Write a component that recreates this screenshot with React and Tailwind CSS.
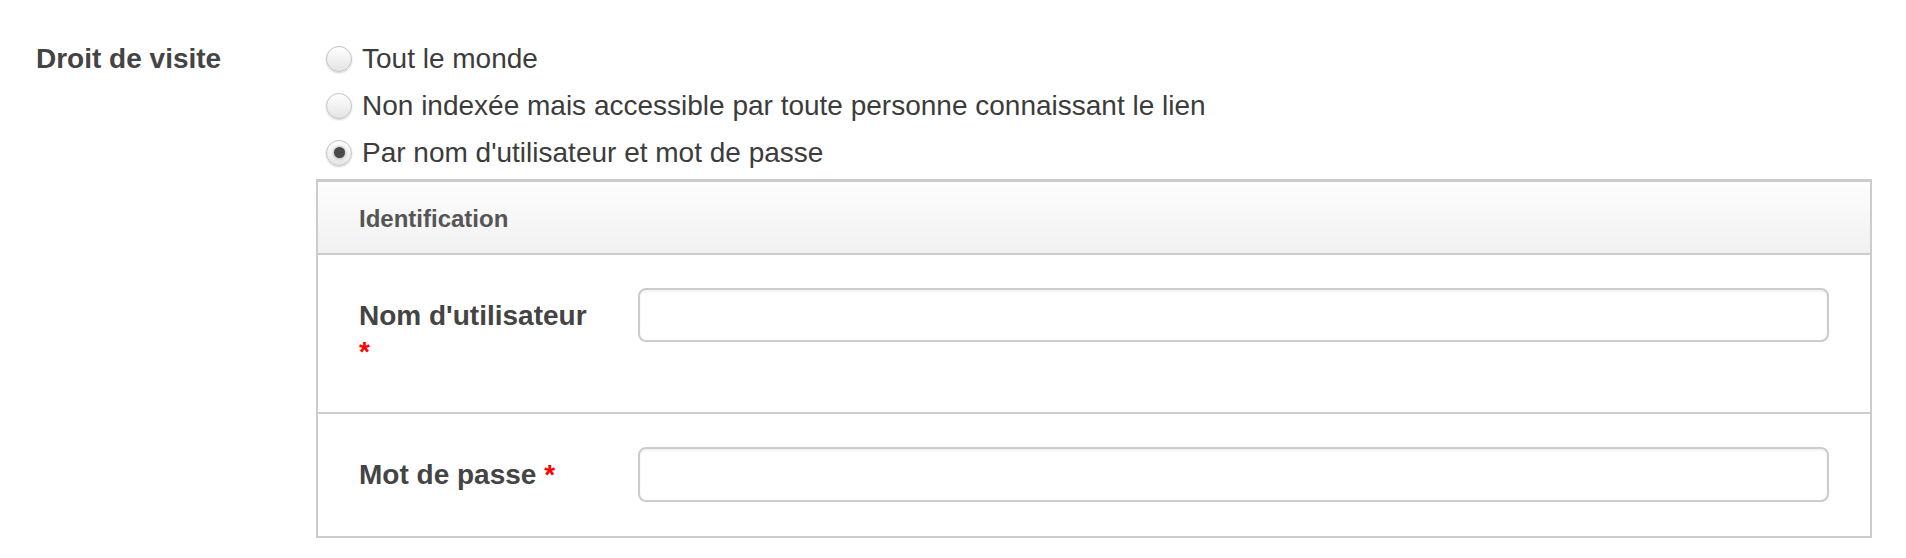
import React from "react";

function Radio({ checked, label }) {
  return (
    <label className="flex h-[47px] items-center gap-[10px]">
      <span className="flex h-[26px] w-[26px] items-center justify-center rounded-full border border-[#c4c4c4] bg-gradient-to-b from-[#ffffff] to-[#e4e4e4] shadow-[0_1px_2px_rgba(0,0,0,0.18)]">
        {checked && <span className="h-[11px] w-[11px] rounded-full bg-[#4a4a4a] shadow-[0_0_3px_rgba(0,0,0,0.45)]" />}
      </span>
      <span className="text-[28px] text-[#3c3c3c]">{label}</span>
    </label>
  );
}

function Req() {
  return <span className="text-[#ff0000]">*</span>;
}

export default function App() {
  return (
    <div className="h-[558px] w-[1906px] bg-white font-['Liberation_Sans',Arial,sans-serif] text-[#444444]">
      <div className="flex pl-[36px] pt-[35px]">
        <div className="w-[280px] text-[28px] font-bold leading-[47px] text-[#444444]">Droit de visite</div>

        <div className="w-[1556px]">
          <div className="pl-[10px]">
            <Radio label="Tout le monde" />
            <Radio label="Non indexée mais accessible par toute personne connaissant le lien" />
            <Radio checked label="Par nom d'utilisateur et mot de passe" />
          </div>

          {/* Identification panel */}
          <div className="mt-[3px] border-2 border-t-[3px] border-[#cccccc]">
            <div className="flex h-[73px] items-center border-b-2 border-[#cccccc] bg-gradient-to-b from-[#fdfdfd] to-[#f1f1f1] px-[41px] pt-[2px] text-[24px] font-bold text-[#555555]">
              Identification
            </div>

            <div className="flex items-start border-b-2 border-[#cccccc] px-[41px] py-[33px]">
              <div className="w-[279px] shrink-0">
                <div className="w-[240px] pb-[9px] pt-[10px] text-[28px] font-bold leading-[36px] text-[#444444]">
                  Nom d'utilisateur <Req />
                </div>
              </div>
              <input type="text" className="h-[54px] flex-1 rounded-[8px] border-2 border-[#cccccc] bg-white shadow-[inset_0_2px_2px_rgba(0,0,0,0.05)] outline-none" />
            </div>

            <div className="flex items-center px-[41px] pb-[34px] pt-[33px]">
              <div className="w-[279px] shrink-0 text-[28px] font-bold leading-[34px] text-[#444444]">
                Mot de passe <Req />
              </div>
              <input type="password" className="h-[55px] flex-1 rounded-[8px] border-2 border-[#cccccc] bg-white shadow-[inset_0_2px_2px_rgba(0,0,0,0.05)] outline-none" />
            </div>
          </div>
        </div>
      </div>
    </div>
  );
}
